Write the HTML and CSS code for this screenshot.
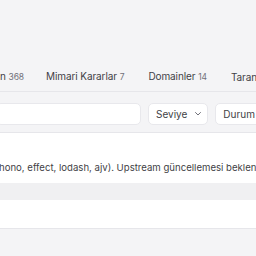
FILE: index.html
```html
<!DOCTYPE html>
<html lang="tr">
<head>
<meta charset="utf-8">
<link rel="stylesheet" href="styles.css">
</head>
<body>
<div class="page">
  <nav class="tabs">
    <div class="tab cut">n <span class="count">368</span></div>
    <div class="tab">Mimari Kararlar <span class="count">7</span></div>
    <div class="tab">Domainler <span class="count">14</span></div>
    <div class="tab">Taran</div>
  </nav>
  <div class="filters">
    <div class="search"></div>
    <div class="select">Seviye <svg class="chev" width="8" height="8" viewBox="0 0 8 8"><path d="M1.5 2.5 L4 5 L6.5 2.5" fill="none" stroke="#71717a" stroke-width="1" stroke-linecap="round" stroke-linejoin="round"/></svg></div>
    <div class="select durum">Durum</div>
  </div>
  <div class="list">
    <div class="row first">
      <p class="desc">hono, effect, lodash, ajv). Upstream güncellemesi beklen</p>
    </div>
    <div class="row band"></div>
    <div class="row second"></div>
  </div>
</div>
</body>
</html>
```
FILE: styles.css
```css
html, body {
  margin: 0;
  padding: 0;
  background: #f4f4f6;
  overflow: hidden;
  width: 256px;
  height: 256px;
  font-family: Inter, "Noto Sans", sans-serif;
  color: #27272a;
}
.page {
  width: 256px;
  overflow: hidden;
}
.tabs {
  display: flex;
  gap: 24px;
  height: 92px;
  align-items: flex-end;
  border-bottom: 1px solid #e6e6ea;
  box-sizing: border-box;
  padding-bottom: 8px;
  white-space: nowrap;
}
.tab {
  font-size: 10px;
  line-height: 12px;
  color: #3f3f46;
  letter-spacing: -0.1px;
  flex-shrink: 0;
}
.tab.cut {
  margin-right: -2px;
}
.count {
  font-size: 8.5px;
  color: #71717a;
}
.filters {
  display: flex;
  gap: 7px;
  padding-top: 11px;
  height: 22px;
  white-space: nowrap;
}
.search {
  width: 145px;
  margin-left: -4px;
  flex-shrink: 0;
  background: #fff;
  border: 1px solid #e8e8ec;
  border-radius: 5px;
  box-sizing: border-box;
  height: 22px;
}
.select {
  background: #fff;
  border: 1px solid #e8e8ec;
  border-radius: 5px;
  box-sizing: border-box;
  height: 22px;
  display: flex;
  align-items: center;
  gap: 7px;
  padding: 0 5px 0 7px;
  font-size: 10px;
  color: #3f3f46;
  flex-shrink: 0;
}
.select.durum {
  width: 80px;
}
.list {
  margin-top: 7px;
  border-top: 1px solid #e6e6ea;
}
.row {
  background: #fff;
}
.row.first {
  height: 50px;
  display: flex;
  align-items: flex-end;
}
.desc {
  margin: 0 0 9px -1px;
  font-size: 9.6px;
  line-height: 12px;
  color: #3f3f46;
  white-space: nowrap;
}
.row.band {
  height: 17px;
  background: #f0f0f2;
}
.row.second {
  height: 28px;
  border-bottom: 1px solid #e6e6ea;
}
```
